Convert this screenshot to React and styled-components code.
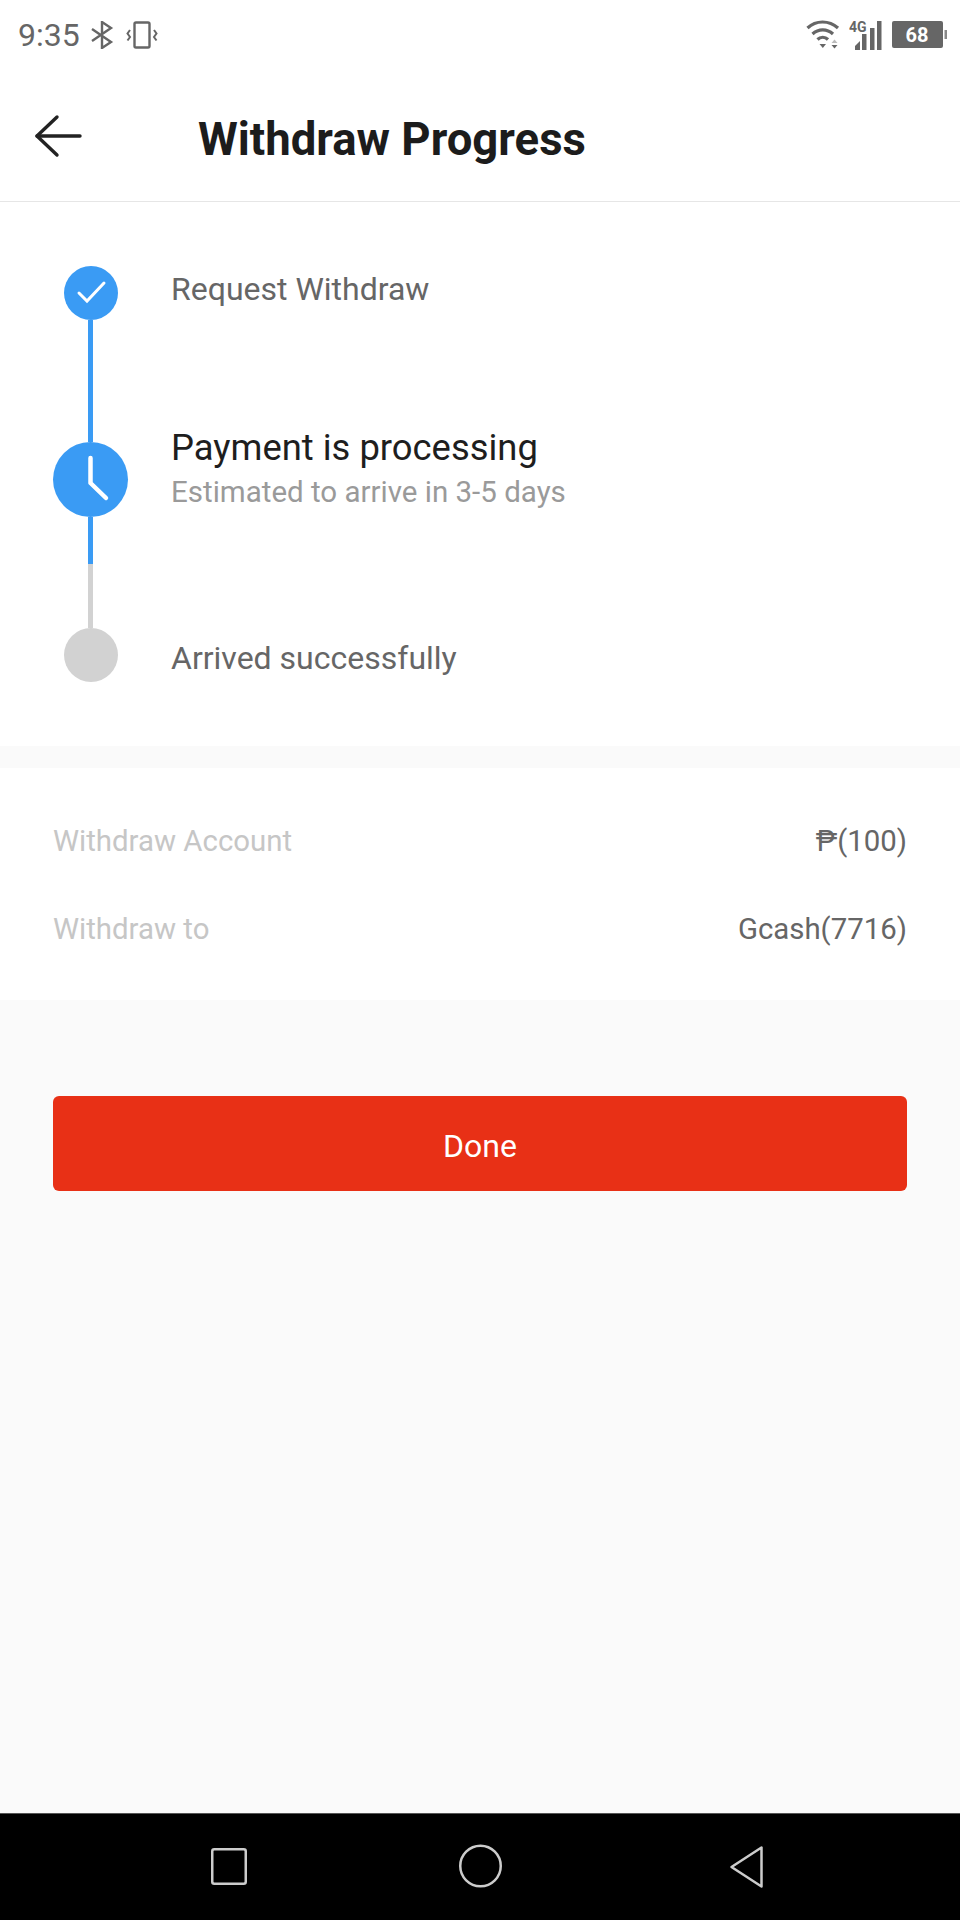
import React from 'react';
import styled, { createGlobalStyle } from 'styled-components';

const BLUE = '#3a9bf4';
const GREY = '#d2d2d2';

const GlobalStyle = createGlobalStyle`
  html, body {
    margin: 0;
    padding: 0;
    background: #fafafa;
    font-family: Roboto, "Liberation Sans", sans-serif;
  }
  * { box-sizing: border-box; }
`;

const Page = styled.div`
  width: 960px;
  height: 1920px;
  display: flex;
  flex-direction: column;
  background: #fafafa;
`;

const StatusBar = styled.div`
  height: 70px;
  flex: none;
  padding: 0 12px 0 18px;
  display: flex;
  align-items: center;
  justify-content: space-between;
  background: #fff;
  color: #666;
`;
const StatusGroup = styled.div`
  display: flex;
  align-items: center;
  gap: ${props => props.gap || 0}px;
`;
const Clock = styled.span`
  font-size: 32px;
  line-height: 34px;
  margin-right: 10px;
`;
const BluetoothIcon = styled.svg`
  margin-right: 12px;
`;

const Header = styled.header`
  height: 132px;
  flex: none;
  padding-left: 34px;
  display: flex;
  align-items: center;
  background: #fff;
  border-bottom: 1px solid #e6e6e6;
`;
const BackIcon = styled.svg`
  width: 48px;
  height: 44px;
  margin-right: 116px;
  flex: none;
`;
const Title = styled.h1`
  margin: 8px 0 0;
  font-size: 45.5px;
  font-weight: 700;
  color: #1c1c1c;
`;

const Timeline = styled.section`
  background: #fff;
  padding: 64px 53px 61px;
`;
const Step = styled.div`
  display: flex;
  align-items: flex-start;
`;
const Rail = styled.div`
  width: 75px;
  flex: none;
  margin-right: 43px;
  display: flex;
  flex-direction: column;
  align-items: center;
`;
const Dot = styled.div`
  width: ${props => props.size}px;
  height: ${props => props.size}px;
  border-radius: 50%;
  background: ${props => props.color};
  display: flex;
  align-items: center;
  justify-content: center;
  flex: none;
`;
const Line = styled.div`
  width: 5px;
  height: ${props => props.length}px;
  background: ${props => props.color};
  flex: none;
`;
const StepText = styled.div`
  margin-top: ${props => props.offset}px;
  display: flex;
  flex-direction: column;
`;
const StepLabel = styled.div`
  font-size: 32px;
  line-height: 54px;
  color: #666;
`;
const StepTitle = styled.div`
  font-size: 36.4px;
  line-height: 44px;
  color: #1e1e1e;
`;
const StepNote = styled.div`
  font-size: 29.5px;
  line-height: 44px;
  color: #9a9a9a;
`;

const Details = styled.section`
  margin-top: 22px;
  padding: 29px 53px 27px;
  background: #fff;
`;
const DetailRow = styled.div`
  height: 88px;
  display: flex;
  align-items: center;
  justify-content: space-between;
  font-size: 29.4px;
`;
const DetailKey = styled.span`
  color: #c6c6c6;
`;
const DetailValue = styled.span`
  color: #666;
`;

const DoneButton = styled.button`
  display: block;
  width: 854px;
  height: 95px;
  margin: 96px 53px 0;
  padding: 4px 0 0;
  border: 0;
  border-radius: 6px;
  background: #e83016;
  color: #fff;
  font-family: inherit;
  font-size: 32px;
`;

const Spacer = styled.div`
  flex: 1;
`;

const NavBar = styled.nav`
  height: 107px;
  flex: none;
  display: flex;
  align-items: center;
  background: #000;
  border-top: 1px solid #555;
  padding-left: 208px;
`;
const NavIcon = styled.svg`
  width: ${props => props.w}px;
  height: 48px;
  margin-right: ${props => props.after || 0}px;
  flex: none;
`;

function StatusRight() {
  return (
    <StatusGroup gap={7}>
      {/* wifi with the up/down arrows */}
      <svg width="36" height="30" viewBox="0 0 36 30" fill="none" stroke="#666">
        <path d="M1.5 8C10 0 23 0 32 8" strokeWidth="3.2" />
        <path d="M6.5 14C12.5 8.5 21 8.5 27 14" strokeWidth="3.2" />
        <path d="M11.5 19.5C14.5 16.5 19 16.5 22 19.5" strokeWidth="3.2" />
        <path d="M13.5 24h6.5l-3.2 4z" fill="#666" stroke="none" />
        <path d="M25.5 23l3-3.4 3 3.4z" fill="#bbb" stroke="none" />
        <path d="M25.5 25h6l-3 3.5z" fill="#666" stroke="none" />
      </svg>
      {/* 4G over the signal bars */}
      <svg width="36" height="30" viewBox="0 0 36 30" fill="#666">
        <text x="0" y="12" fontFamily="Roboto, sans-serif" fontWeight="700" fontSize="14">4G</text>
        <path d="M6 30v-4l5-5v9z" />
        <rect x="13" y="14" width="4.5" height="16" />
        <rect x="21" y="8" width="4.5" height="22" />
        <rect x="28" y="1" width="4.5" height="29" />
      </svg>
      {/* battery */}
      <svg width="56" height="30" viewBox="0 0 56 30">
        <rect x="0" y="1" width="51" height="27" rx="2" fill="#666" />
        <rect x="52.5" y="10" width="2.5" height="9" fill="#888" />
        <text x="25" y="22" textAnchor="middle" fontFamily="Roboto, sans-serif" fontWeight="700" fontSize="20" fill="#fff">68</text>
      </svg>
    </StatusGroup>
  );
}

function App() {
  return (
    <Page>
      <GlobalStyle />
      <StatusBar>
        <StatusGroup>
          <Clock>9:35</Clock>
          <BluetoothIcon width="24" height="28" viewBox="0 0 24 28" fill="none" stroke="#666" strokeWidth="2.4">
            <path d="M2 8l19 13-9 6V1l9 6L2 20" />
          </BluetoothIcon>
          <svg width="32" height="28" viewBox="0 0 32 28" fill="none" stroke="#666" strokeWidth="2">
            <rect x="8.5" y="1.5" width="15" height="25" rx="1.5" strokeWidth="2.4" />
            <path d="M4 9L1.5 12.5 4 16 1.5 19.5" />
            <path d="M28 9l2.5 3.5L28 16l2.5 3.5" />
          </svg>
        </StatusGroup>
        <StatusRight />
      </StatusBar>

      <Header>
        <BackIcon viewBox="0 0 48 44" fill="none" stroke="#222" strokeWidth="3.4" strokeLinecap="round" strokeLinejoin="round">
          <path d="M46 22H3" />
          <path d="M23 3L3 22l20 19" />
        </BackIcon>
        <Title>Withdraw Progress</Title>
      </Header>

      <Timeline>
        <Step>
          <Rail>
            <Dot size={54} color={BLUE}>
              <svg width="54" height="54" viewBox="0 0 54 54" fill="none" stroke="#fff" strokeWidth="3" strokeLinecap="round">
                <path d="M15 27l8 8 17-18" />
              </svg>
            </Dot>
            <Line color={BLUE} length={122} />
          </Rail>
          <StepText offset={-4}>
            <StepLabel>Request Withdraw</StepLabel>
          </StepText>
        </Step>
        <Step>
          <Rail>
            <Dot size={75} color={BLUE}>
              <svg width="75" height="75" viewBox="0 0 75 75" fill="none" stroke="#fff" strokeWidth="4.5" strokeLinecap="round" strokeLinejoin="round">
                <path d="M37.5 16v25L53 56" />
              </svg>
            </Dot>
            <Line color={BLUE} length={47} />
            <Line color={GREY} length={64} />
          </Rail>
          <StepText offset={-16}>
            <StepTitle>Payment is processing</StepTitle>
            <StepNote>Estimated to arrive in 3-5 days</StepNote>
          </StepText>
        </Step>
        <Step>
          <Rail>
            <Dot size={54} color={GREY} />
          </Rail>
          <StepText offset={3}>
            <StepLabel>Arrived successfully</StepLabel>
          </StepText>
        </Step>
      </Timeline>

      <Details>
        <DetailRow>
          <DetailKey>Withdraw Account</DetailKey>
          <DetailValue>₱(100)</DetailValue>
        </DetailRow>
        <DetailRow>
          <DetailKey>Withdraw to</DetailKey>
          <DetailValue>Gcash(7716)</DetailValue>
        </DetailRow>
      </Details>

      <DoneButton>Done</DoneButton>
      <Spacer />

      <NavBar>
        <NavIcon w={42} after={206} viewBox="0 0 42 48" fill="none" stroke="#ccc" strokeWidth="2.5">
          <rect x="4.25" y="6.25" width="33.5" height="34.5" rx="2" />
        </NavIcon>
        <NavIcon w={46} after={226} viewBox="0 0 46 48" fill="none" stroke="#ccc" strokeWidth="2.5">
          <circle cx="24.5" cy="23" r="20.25" />
        </NavIcon>
        <NavIcon w={36} viewBox="0 0 36 48" fill="none" stroke="#ccc" strokeWidth="2.5" strokeLinejoin="round">
          <path d="M33.5 4.5v39L3.5 24z" />
        </NavIcon>
      </NavBar>
    </Page>
  );
}

export default App;
